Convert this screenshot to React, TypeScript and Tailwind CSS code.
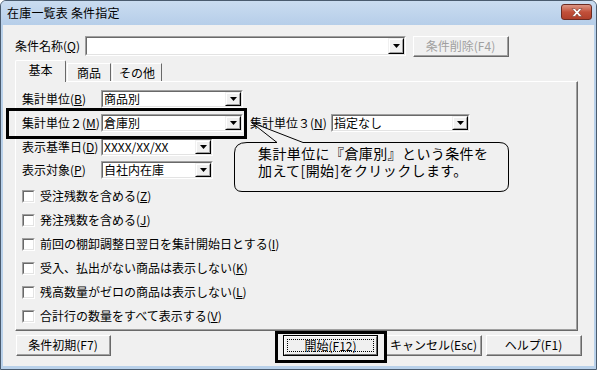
import React from "react";

const F = "font-['Noto_Sans_CJK_JP',sans-serif]";

function Arrow() {
  return (
    <svg width="7" height="4" viewBox="0 0 7 4">
      <path d="M0 0H7L3.5 4Z" fill="#000" />
    </svg>
  );
}

function DropBtn() {
  return (
    <div className="w-[16px] h-full border-t border-l border-t-[#f0f0f0] border-l-[#f0f0f0] border-r border-b border-r-[#000] border-b-[#000] bg-[#f0f0f0]">
      <div className="w-full h-full border-t border-l border-t-white border-l-white border-r border-b border-r-[#a0a0a0] border-b-[#a0a0a0] flex items-center justify-center">
        <Arrow />
      </div>
    </div>
  );
}

function Combo({ w, h, text }: { w: string; h: string; text?: string }) {
  return (
    <div className={`${w} ${h} border-t border-l border-t-[#a0a0a0] border-l-[#a0a0a0] border-b border-r border-b-white border-r-white`}>
      <div className="w-full h-full border-t border-l border-t-[#696969] border-l-[#696969] border-b border-r border-b-[#e3e3e3] border-r-[#e3e3e3] bg-white flex items-stretch">
        <div className="flex-1 pl-[1px] text-[12px] leading-none flex items-center text-black">{text}</div>
        <DropBtn />
      </div>
    </div>
  );
}

function Btn({ w, children, disabled }: { w: string; children: React.ReactNode; disabled?: boolean }) {
  return (
    <div className={`${w} h-[21px] border-t border-l border-t-white border-l-white border-b border-r border-b-[#696969] border-r-[#696969] bg-[#f0f0f0]`}>
      <div className={`w-full h-full border-b border-r border-b-[#a0a0a0] border-r-[#a0a0a0] flex items-center justify-center text-[12px] leading-none ${disabled ? "text-[#a0a0a0]" : "text-black"}`}>
        {children}
      </div>
    </div>
  );
}

function Check({ children }: { children: React.ReactNode }) {
  return (
    <div className="h-[24px] flex items-center">
      <div className="w-[13px] h-[13px] border-t border-l border-t-[#a0a0a0] border-l-[#a0a0a0] border-b border-r border-b-white border-r-white">
        <div className="w-full h-full border-t border-l border-t-[#696969] border-l-[#696969] border-b border-r border-b-[#e3e3e3] border-r-[#e3e3e3] bg-white" />
      </div>
      <span className="ml-[5px] text-[12px] leading-none">{children}</span>
    </div>
  );
}

export default function App() {
  return (
    <div className={`${F} relative w-[597px] h-[370px] bg-[#b9d1ea] border border-[#4a5b6e] rounded-t-[6px] flex flex-col overflow-hidden text-black`}>
      {/* Title bar */}
      <div className="h-[24px] shrink-0 flex items-center justify-between pl-[6px] pr-[4px] bg-gradient-to-b from-[#cadcf0] to-[#b6cee9]">
        <span className="text-[12px] leading-none tracking-[0.2px]">在庫一覧表 条件指定</span>
        <div className="w-[31px] h-[16px] mt-[-2px] rounded-[3px] border border-[#6b2b22] bg-gradient-to-b from-[#dc9685] via-[#c2503a] to-[#b0402b] flex items-center justify-center">
          <svg width="12" height="9" viewBox="0 0 12 9">
            <path d="M1 0.5H4L6 3L8 0.5H11L7.6 4.5L11 8.5H8L6 6L4 8.5H1L4.4 4.5Z" fill="#fff" stroke="#7a3a30" strokeWidth="0.6" />
          </svg>
        </div>
      </div>

      {/* Client area */}
      <div className="flex-1 mx-[2px] mb-[3px] bg-[#f0f0f0] relative pt-[11px] pl-[12px]">
        {/* Row 1 */}
        <div className="flex items-center h-[20px]">
          <span className="w-[70px] text-[12px] leading-none">
            条件名称(<span className="underline">Q</span>)
          </span>
          <Combo w="w-[321px]" h="h-[20px]" />
          <div className="ml-[7px]">
            <Btn w="w-[96px]" disabled>
              条件削除(F4)
            </Btn>
          </div>
        </div>

        {/* Tabs */}
        <div className="mt-[4px] flex items-end h-[21px] relative z-10">
          <div className="w-[51px] border-t border-l border-t-white border-l-white border-r border-r-[#696969] bg-[#f0f0f0] rounded-t-[2px] flex items-center justify-center text-[12px] leading-none pb-[3px] -mb-[1px] h-[22px]">
            基本
          </div>
          <div className="ml-[1px] w-[44px] h-[18px] border-t border-l border-t-white border-l-white border-r border-r-[#696969] flex items-center justify-center text-[12px] leading-none">
            商品
          </div>
          <div className="ml-[1px] w-[50px] h-[18px] border-t border-l border-t-white border-l-white border-r border-r-[#696969] flex items-center justify-center text-[12px] leading-none">
            その他
          </div>
        </div>

        {/* Panel */}
        <div className="w-[563px] h-[250px] border-t border-l border-t-white border-l-white border-b border-r border-b-[#696969] border-r-[#696969]">
          <div className="w-full h-full border-b border-r border-b-[#a0a0a0] border-r-[#a0a0a0] pt-[8px] pl-[6px]">
            <div className="flex items-center h-[18px]">
              <span className="w-[79px] text-[12px] leading-none">
                集計単位(<span className="underline">B</span>)
              </span>
              <Combo w="w-[142px]" h="h-[18px]" text="商品別" />
            </div>
            <div className="flex items-center h-[18px] mt-[6px]">
              <span className="w-[79px] text-[12px] leading-none">
                集計単位２(<span className="underline">M</span>)
              </span>
              <Combo w="w-[142px]" h="h-[18px]" text="倉庫別" />
              <span className="ml-[7px] w-[81px] text-[12px] leading-none">
                集計単位３(<span className="underline">N</span>)
              </span>
              <Combo w="w-[139px]" h="h-[18px]" text="指定なし" />
            </div>
            <div className="flex items-center h-[18px] mt-[6px]">
              <span className="w-[79px] text-[12px] leading-none">
                表示基準日(<span className="underline">D</span>)
              </span>
              <Combo w="w-[112px]" h="h-[18px]" text="XXXX/XX/XX" />
            </div>
            <div className="flex items-center h-[18px] mt-[5px]">
              <span className="w-[79px] text-[12px] leading-none">
                表示対象(<span className="underline">P</span>)
              </span>
              <Combo w="w-[112px]" h="h-[18px]" text="自社内在庫" />
            </div>
            <div className="mt-[5px] flex flex-col">
              <Check>
                受注残数を含める(<span className="underline">Z</span>)
              </Check>
              <Check>
                発注残数を含める(<span className="underline">J</span>)
              </Check>
              <Check>
                前回の棚卸調整日翌日を集計開始日とする(<span className="underline">I</span>)
              </Check>
              <Check>
                受入、払出がない商品は表示しない(<span className="underline">K</span>)
              </Check>
              <Check>
                残高数量がゼロの商品は表示しない(<span className="underline">L</span>)
              </Check>
              <Check>
                合計行の数量をすべて表示する(<span className="underline">V</span>)
              </Check>
            </div>
          </div>
        </div>

        {/* Bottom buttons */}
        <div className="mt-[4px] flex items-center">
          <div className="ml-[1px]">
            <Btn w="w-[95px]">条件初期(F7)</Btn>
          </div>
          <div className="ml-[172px] w-[95px] h-[21px] border border-black bg-[#f0f0f0]">
            <div className="w-full h-full border-t border-l border-t-white border-l-white border-b border-r border-b-[#696969] border-r-[#696969] p-[2px]">
              <div className="w-full h-full border border-dotted border-black flex items-center justify-center text-[12px] leading-none">
                開始(F12)
              </div>
            </div>
          </div>
          <div className="ml-[8px]">
            <Btn w="w-[96px]">キャンセル(Esc)</Btn>
          </div>
          <div className="ml-[4px]">
            <Btn w="w-[96px]">ヘルプ(F1)</Btn>
          </div>
        </div>
      </div>

      {/* Annotations overlay */}
      <div className="absolute left-[5px] top-[107px] w-[241px] h-[31px] border-[3px] border-black pointer-events-none" />
      <div className="absolute left-[274px] top-[330px] w-[112px] h-[32px] border-[3px] border-black pointer-events-none" />
      <svg className="absolute left-0 top-0 pointer-events-none" width="597" height="370" viewBox="0 0 597 370">
        <path
          d="M276 141.5 L250.5 121.5 L302 141.5 L498 141.5 Q507.5 141.5 507.5 150 L507.5 183 Q507.5 190.5 499 190.5 L241 190.5 Q233.5 190.5 233.5 183 L233.5 152 Q233.5 141.5 246 141.5 Z"
          fill="#f0f0f0"
          stroke="#000"
          strokeWidth="1"
        />
      </svg>
      <div className="absolute left-[257px] top-[144px] text-[14px] leading-[17px] tracking-[0.4px] pointer-events-none">
        <div>集計単位に『倉庫別』という条件を</div>
        <div>加えて[開始]をクリックします。</div>
      </div>
    </div>
  );
}
